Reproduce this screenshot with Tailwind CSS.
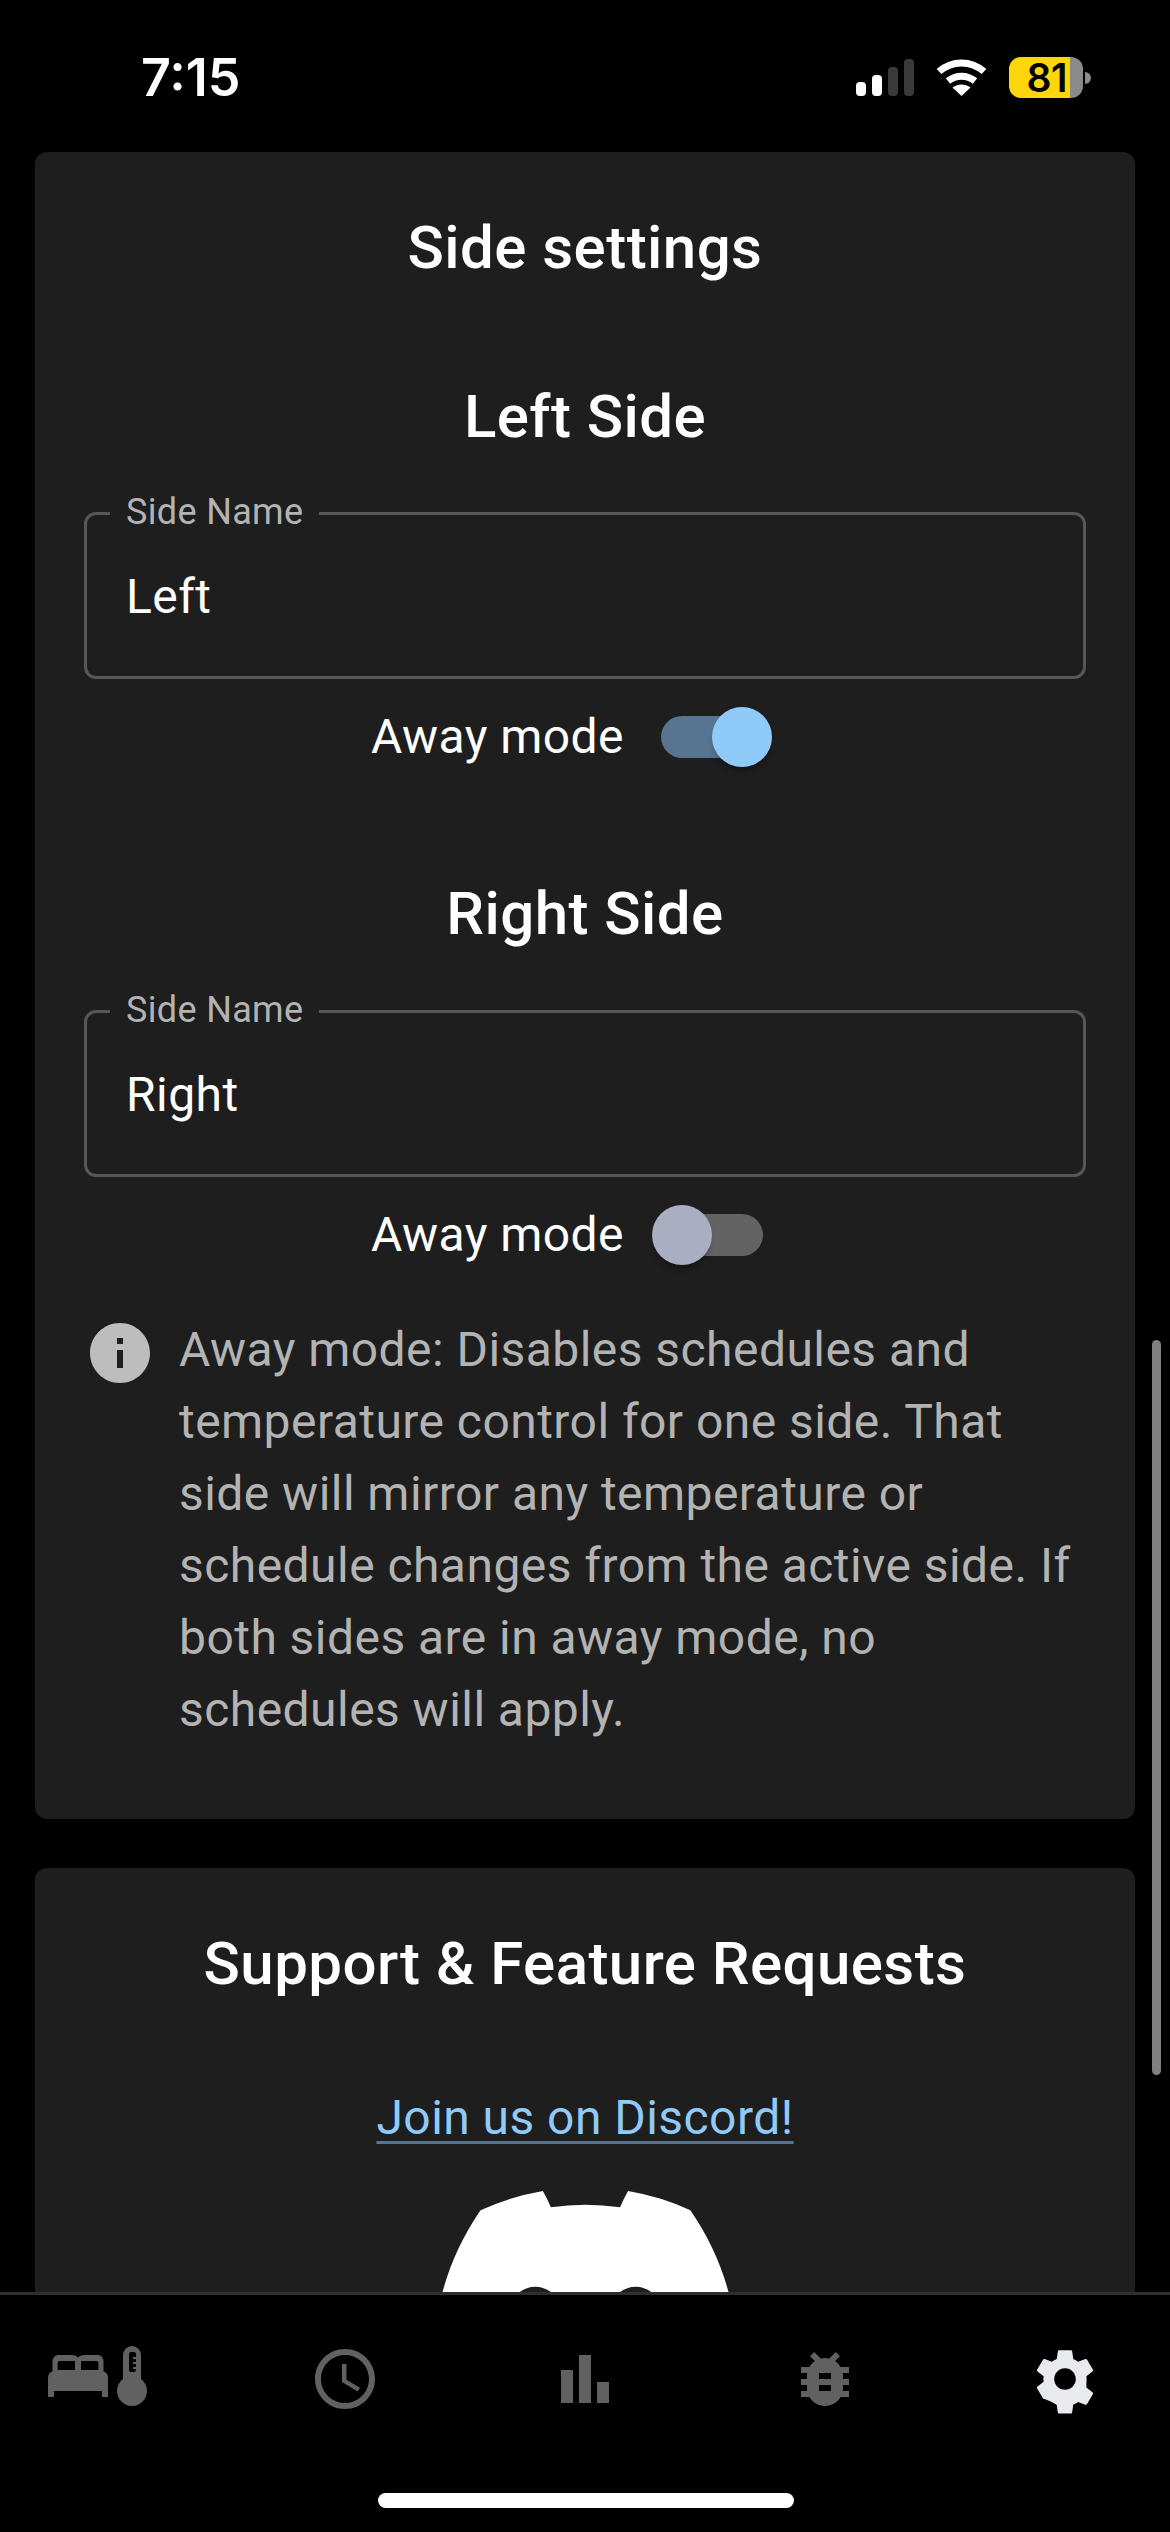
<!DOCTYPE html>
<html lang="en">
<head>
  <meta charset="UTF-8">
  <meta name="viewport" content="width=device-width,initial-scale=1.0">
  <title>Settings</title>
  <script src="https://cdn.jsdelivr.net/npm/@tailwindcss/browser@4"></script>
</head>
<body class="bg-black font-['Roboto',sans-serif] tracking-[0.45px]">
<div class="relative w-[1170px] h-[2532px] flex flex-col overflow-hidden bg-black text-white">

  <!-- Status bar -->
  <div class="h-[152px] shrink-0 flex items-start justify-between pl-[141px] pr-[79px] pt-[49px]">
    <span class="font-['Inter',sans-serif] font-semibold text-[52px] leading-[58px] tracking-normal">7:15</span>
    <div class="flex items-center gap-[22px] pt-[8px]">
      <svg class="w-[58px] h-[37px]" viewBox="0 0 58 37">
        <rect x="0" y="23" width="10" height="14" rx="4" fill="#fff"/>
        <rect x="16" y="16" width="10" height="21" rx="4" fill="#fff"/>
        <rect x="32" y="8" width="10" height="29" rx="4" fill="#3a3a3a"/>
        <rect x="48" y="0" width="10" height="37" rx="4" fill="#3a3a3a"/>
      </svg>
      <svg class="w-[51px] h-[37px]" viewBox="0 0 51 37">
        <path d="M3 12.5C16 1 35 1 48 12.5" fill="none" stroke="#fff" stroke-width="7"/>
        <path d="M12 22C20 15.500 31 15.500 39 22" fill="none" stroke="#fff" stroke-width="7"/>
        <path d="M16.500 28.500C22 24.500 29 24.500 34.500 28.500L25.500 37Z" fill="#fff"/>
      </svg>
      <div class="flex items-center">
        <div class="w-[61px] h-[41px] rounded-l-[12px] bg-[#ffd60a] flex items-center justify-end pr-[3px]">
          <span class="font-['Inter',sans-serif] font-semibold text-[39px] leading-[41px] text-black tracking-[-0.5px]">81</span>
        </div>
        <div class="w-[13px] h-[41px] rounded-r-[12px] bg-[#8a8a8a]"></div>
        <div class="w-[6px] h-[12px] ml-[2px] rounded-r-full bg-[#8a8a8a]"></div>
      </div>
    </div>
  </div>

  <!-- Scrolling content -->
  <main class="flex-1 overflow-hidden px-[35px]">
    <section class="bg-[#1e1e1e] rounded-[12px] px-[49px] pt-[56px] pb-[73px]">
      <h2 class="text-center text-[60px] leading-[80px] font-medium">Side settings</h2>

      <h3 class="mt-[89px] text-center text-[60px] leading-[80px] font-medium">Left Side</h3>
      <div class="relative mt-[55px] h-[167px] border-[3px] border-[#575757] rounded-[12px] flex items-center pl-[39px] pt-[2px] text-[48px]">
        <span class="absolute left-[23px] top-[-24px] px-[16px] bg-[#1e1e1e] text-[36px] leading-[42px] tracking-[0.34px] text-[#b3b3b3]">Side Name</span>
        Left
      </div>
      <div class="mt-[28px] h-[60px] flex items-center justify-center gap-[37px] pr-[36px]">
        <span class="text-[48px]">Away mode</span>
        <div class="relative w-[102px] h-[42px] rounded-full bg-[#577490]">
          <div class="absolute right-[-9px] top-[-9px] w-[60px] h-[60px] rounded-full bg-[#90caf9] shadow-[0_6px_6px_-3px_rgba(0,0,0,0.4)]"></div>
        </div>
      </div>

      <h3 class="mt-[107px] text-center text-[60px] leading-[80px] font-medium">Right Side</h3>
      <div class="relative mt-[56px] h-[167px] border-[3px] border-[#575757] rounded-[12px] flex items-center pl-[39px] pt-[2px] text-[48px]">
        <span class="absolute left-[23px] top-[-24px] px-[16px] bg-[#1e1e1e] text-[36px] leading-[42px] tracking-[0.34px] text-[#b3b3b3]">Side Name</span>
        Right
      </div>
      <div class="mt-[28px] h-[60px] flex items-center justify-center gap-[37px] pr-[36px]">
        <span class="text-[48px]">Away mode</span>
        <div class="relative w-[102px] h-[42px] rounded-full bg-[#636363]">
          <div class="absolute left-[-9px] top-[-9px] w-[60px] h-[60px] rounded-full bg-[#a9aec3] shadow-[0_6px_6px_-3px_rgba(0,0,0,0.4)]"></div>
        </div>
      </div>

      <div class="mt-[49px] flex gap-[23px]">
        <svg class="w-[72px] h-[72px] mt-[3px] shrink-0" viewBox="0 0 24 24" fill="#bdbdbd">
          <path d="M12 2C6.48 2 2 6.48 2 12s4.48 10 10 10 10-4.48 10-10S17.52 2 12 2zm1 15h-2v-6h2v6zm0-8h-2V7h2v2z"/>
        </svg>
        <p class="text-[48px] leading-[72px] text-[#b3b3b3]">Away mode: Disables schedules and temperature control for one side. That side will mirror any temperature or schedule changes from the active side. If both sides are in away mode, no schedules will apply.</p>
      </div>
    </section>

    <section class="mt-[49px] bg-[#1e1e1e] rounded-[12px] px-[49px] pt-[56px] pb-[60px] flex flex-col items-center">
      <h2 class="text-[60px] leading-[80px] font-medium">Support &amp; Feature Requests</h2>
      <a class="mt-[78px] text-[48px] leading-[72px] text-[#90caf9] underline decoration-[#577490] decoration-[3px] underline-offset-[7px]">Join us on Discord!</a>
      <svg class="mt-[37px] w-[303px] h-[229px] shrink-0" viewBox="0 0 127.14 96.36" fill="#fff">
        <path d="M107.7,8.07A105.15,105.15,0,0,0,81.47,0a72.06,72.06,0,0,0-3.36,6.83A97.68,97.68,0,0,0,49,6.83,72.37,72.37,0,0,0,45.64,0,105.89,105.89,0,0,0,19.39,8.09C2.79,32.65-1.71,56.6.54,80.21h0A105.73,105.73,0,0,0,32.71,96.36,77.7,77.7,0,0,0,39.6,85.25a68.42,68.42,0,0,1-10.85-5.18c.91-.66,1.8-1.34,2.66-2a75.57,75.57,0,0,0,64.32,0c.87.71,1.76,1.39,2.66,2a68.68,68.68,0,0,1-10.87,5.19,77,77,0,0,0,6.89,11.1A105.25,105.25,0,0,0,126.6,80.22h0C129.24,52.84,122.09,29.11,107.7,8.07ZM42.45,65.69C36.18,65.69,31,60,31,53s5-12.74,11.43-12.74S54,46,53.89,53,48.84,65.69,42.45,65.69Zm42.24,0C78.41,65.69,73.25,60,73.25,53s5-12.74,11.44-12.74S96.23,46,96.12,53,91.08,65.69,84.69,65.69Z"/>
      </svg>
    </section>
  </main>

  <!-- Scrollbar -->
  <div class="absolute left-[1152px] top-[1340px] w-[9px] h-[735px] rounded-full bg-[#808080]"></div>

  <!-- Bottom nav -->
  <nav class="h-[240px] shrink-0 bg-black border-t-[3px] border-[#2f2f2f] relative z-10">
    <div class="flex items-start pl-[42px] pt-[48px]">
      <div class="flex w-[120px] h-[72px] -mt-[3px]">
        <svg class="w-[72px] h-[72px] shrink-0" viewBox="0 0 24 24" fill="#616161">
          <path fill-rule="evenodd" d="M20.500 10.400V7c0-1.100-.9-2-2-2H14c-.8 0-1.500.3-2 .8-.5-.5-1.200-.8-2-.8H5.500c-1.100 0-2 .9-2 2v3.400C2.600 10.700 2 11.500 2 12.500V19h2v-2h16v2h2v-6.500c0-1-.6-1.800-1.500-2.100zM11 10H5.200V7.700c0-.4.3-.7.7-.7H11v3zm7.800 0H13V7h5.100c.4 0 .7.3.7.7V10z"/>
        </svg>
        <svg class="w-[36px] h-[72px] shrink-0" viewBox="0 0 36 72" fill="#616161">
          <path d="M9 39V15a9 9 0 0 1 18 0v24a15 15 0 1 1-18 0z"/>
          <rect x="15" y="12" width="7" height="20" rx="2" fill="#000"/>
          <rect x="19" y="17" width="3" height="2"/>
          <rect x="19" y="22" width="3" height="2"/>
          <rect x="19" y="27" width="3" height="2"/>
        </svg>
      </div>
      <svg class="ml-[147px] w-[72px] h-[72px]" viewBox="0 0 24 24" fill="#616161">
        <path d="M11.990 2C6.470 2 2 6.480 2 12s4.470 10 9.990 10C17.520 22 22 17.520 22 12S17.520 2 11.990 2zM12 20c-4.420 0-8-3.580-8-8s3.580-8 8-8 8 3.580 8 8-3.580 8-8 8z"/>
        <path d="M12.500 7H11v6l5.250 3.150.75-1.230-4.500-2.670z"/>
      </svg>
      <svg class="ml-[168px] w-[72px] h-[72px]" viewBox="0 0 72 72" fill="#616161">
        <rect x="12" y="27" width="12" height="33"/>
        <rect x="30" y="12" width="12" height="48"/>
        <rect x="48" y="39" width="12" height="21"/>
      </svg>
      <svg class="ml-[168px] w-[72px] h-[72px]" viewBox="0 0 24 24" fill="#616161">
        <path d="M20 8h-2.810c-.45-.78-1.070-1.450-1.820-1.960L17 4.410 15.590 3l-2.170 2.170C12.960 5.060 12.490 5 12 5c-.49 0-.96.06-1.410.17L8.410 3 7 4.410l1.620 1.630C7.880 6.550 7.260 7.220 6.810 8H4v2h2.090c-.05.33-.09.66-.09 1v1H4v2h2v1c0 .34.04.67.09 1H4v2h2.810c1.040 1.790 2.970 3 5.190 3s4.150-1.210 5.190-3H20v-2h-2.090c.05-.33.09-.66.09-1v-1h2v-2h-2v-1c0-.34-.04-.67-.09-1H20V8zm-6 8h-4v-2h4v2zm0-4h-4v-2h4v2z"/>
      </svg>
      <svg class="ml-[168px] w-[72px] h-[72px]" viewBox="0 0 24 24" fill="#e8eaed">
        <path d="M19.140 12.940c.04-.3.06-.61.06-.94 0-.32-.02-.64-.07-.94l2.030-1.580c.18-.14.23-.41.12-.61l-1.920-3.320c-.12-.22-.37-.29-.59-.22l-2.390.96c-.5-.38-1.030-.7-1.620-.94l-.36-2.540c-.04-.24-.24-.41-.48-.41h-3.840c-.24 0-.43.17-.47.41l-.36 2.540c-.59.24-1.130.57-1.620.94l-2.390-.96c-.22-.08-.47 0-.59.22L2.740 8.870c-.12.21-.08.47.12.61l2.030 1.580c-.05.3-.09.63-.09.94s.02.64.07.94l-2.030 1.580c-.18.14-.23.41-.12.61l1.920 3.320c.12.22.37.29.59.22l2.390.96c.5.38 1.030.7 1.620.94l.36 2.540c.05.24.24.41.48.41h3.840c.24 0 .44-.17.47-.41l.36-2.540c.59-.24 1.130-.56 1.620-.94l2.390.96c.22.08.47 0 .59-.22l1.920-3.320c.12-.22.07-.47-.12-.61l-2.010-1.580zM12 15.600c-1.980 0-3.600-1.620-3.600-3.600s1.620-3.600 3.600-3.600 3.600 1.620 3.600 3.600-1.620 3.600-3.600 3.600z"/>
      </svg>
    </div>
    <div class="absolute left-[378px] top-[198px] w-[416px] h-[15px] rounded-full bg-white"></div>
  </nav>
</div>
</body>
</html>
